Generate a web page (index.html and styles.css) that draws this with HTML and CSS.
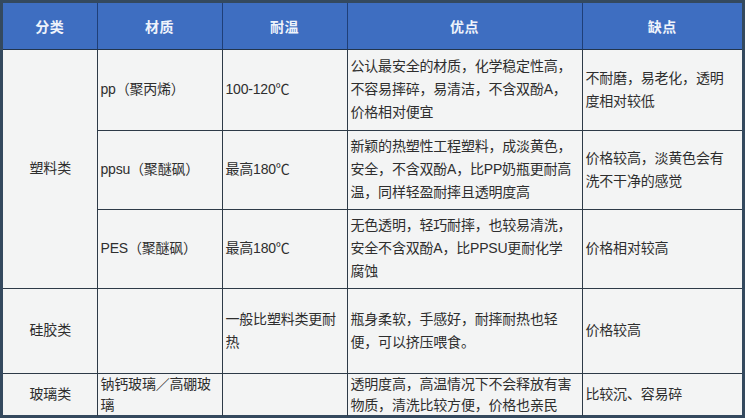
FILE: index.html
```html
<!DOCTYPE html>
<html lang="zh">
<head>
<meta charset="utf-8">
<link rel="stylesheet" href="styles.css">
</head>
<body>
<div class="frame">
<table class="tbl">
  <colgroup>
    <col class="c1"><col class="c2"><col class="c3"><col class="c4"><col class="c5">
  </colgroup>
  <thead>
    <tr class="rh">
      <th>分类</th><th>材质</th><th>耐温</th><th>优点</th><th>缺点</th>
    </tr>
  </thead>
  <tbody>
    <tr class="r1">
      <td class="cat" rowspan="3">塑料类</td>
      <td>pp（聚丙烯）</td>
      <td>100-120℃</td>
      <td>公认最安全的材质，化学稳定性高，<br>不容易摔碎，易清洁，不含双酚A，<br>价格相对便宜</td>
      <td>不耐磨，易老化，透明<br>度相对较低</td>
    </tr>
    <tr class="r2">
      <td>ppsu（聚醚砜）</td>
      <td>最高180℃</td>
      <td>新颖的热塑性工程塑料，成淡黄色，<br>安全，不含双酚A，比PP奶瓶更耐高<br>温，同样轻盈耐摔且透明度高</td>
      <td>价格较高，淡黄色会有<br>洗不干净的感觉</td>
    </tr>
    <tr class="r3">
      <td>PES（聚醚砜）</td>
      <td>最高180℃</td>
      <td>无色透明，轻巧耐摔，也较易清洗，<br>安全不含双酚A，比PPSU更耐化学<br>腐蚀</td>
      <td>价格相对较高</td>
    </tr>
    <tr class="r4">
      <td class="cat">硅胶类</td>
      <td></td>
      <td>一般比塑料类更耐<br>热</td>
      <td>瓶身柔软，手感好，耐摔耐热也轻<br>便，可以挤压喂食。</td>
      <td>价格较高</td>
    </tr>
    <tr class="r5">
      <td class="cat">玻璃类</td>
      <td>钠钙玻璃／高硼玻<br>璃</td>
      <td></td>
      <td>透明度高，高温情况下不会释放有害<br>物质，清洗比较方便，价格也亲民</td>
      <td>比较沉、容易碎</td>
    </tr>
  </tbody>
</table>
</div>
</body>
</html>
```
FILE: styles.css
```css
html, body {
  margin: 0;
  padding: 0;
  background: #f3f4f4;
}
body {
  width: 745px;
  height: 418px;
  overflow: hidden;
}
.frame {
  box-sizing: border-box;
  width: 745px;
  height: 418px;
  border: 3px solid #34495e;
  background: #f3f4f4;
}
.tbl {
  width: 739px;
  height: 412px;
  border-collapse: collapse;
  border-style: hidden;
  table-layout: fixed;
  font-family: "Liberation Sans", "Noto Sans CJK SC", sans-serif;
  font-size: 14px;
  color: #2e2e2e;
}
.c1 { width: 94px; }
.c2 { width: 125px; }
.c3 { width: 125px; }
.c4 { width: 235px; }
.c5 { width: 160px; }
.tbl th {
  background: #3e6ec1;
  color: #eef3fb;
  font-weight: 700;
  text-align: center;
  vertical-align: middle;
  border: 1px solid #1f3f78;
  border-bottom: 1px solid #22354d;
  padding: 0;
  letter-spacing: 0.5px;
}
.tbl td {
  border: 1px solid #2d3a47;
  padding: 0 2px 0 3px;
  vertical-align: middle;
  text-align: left;
  line-height: 23px;
  letter-spacing: -0.2px;
}
.tbl td.cat {
  text-align: center;
}
.rh { height: 46px; }
.r1 { height: 81px; }
.r2 { height: 79px; }
.r3 { height: 79px; }
.r4 { height: 85px; }
.r5 { height: 42px; }
.r5 td { line-height: 21px; }
```
